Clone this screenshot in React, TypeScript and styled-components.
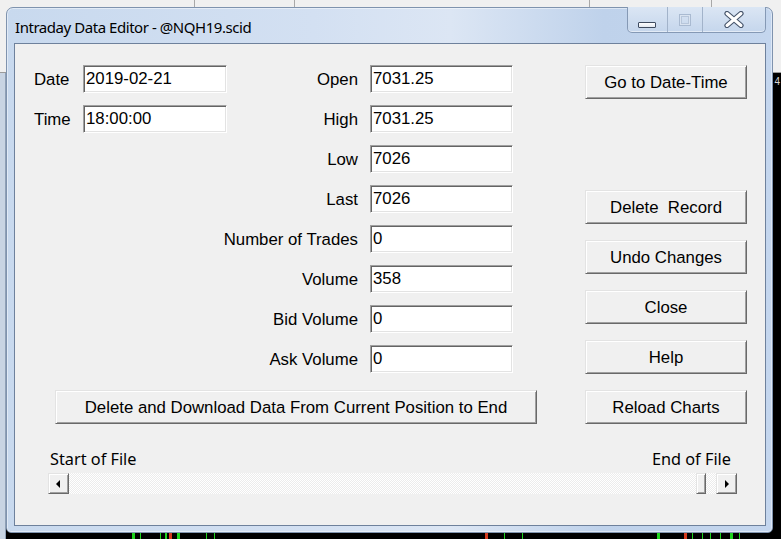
import React from 'react';
import styled, { createGlobalStyle } from 'styled-components';

const Global = createGlobalStyle`
  html, body { margin: 0; padding: 0; }
  body {
    width: 781px;
    height: 539px;
    overflow: hidden;
    font-family: "Liberation Sans", Arial, sans-serif;
  }
  * { box-sizing: border-box; }
`;

const Desktop = styled.div`
  position: relative;
  width: 781px;
  height: 539px;
  display: flex;
  flex-direction: column;
  background: #f0f0f0;
  overflow: hidden;
`;

const AppToolbar = styled.div`
  height: 73px;
  display: flex;
  background: #f0f0f0;
  border-bottom: 1px solid #9a9a9a;
`;

const ToolSegment = styled.div<{ $w: number }>`
  width: ${(p) => p.$w}px;
  height: 8px;
  border-right: 1px solid #a8a8a8;
  flex: none;
`;

const ChartRow = styled.div`
  flex: 1;
  display: flex;
`;

const LeftStrip = styled.div`
  width: 6px;
  background: #c8d4e3;
  border-right: 1px solid #8fa0b6;
`;

const Chart = styled.div`
  position: relative;
  flex: 1;
  background: #000;
`;

const ChartLabel = styled.span`
  position: absolute;
  top: 3px;
  right: 1px;
  color: #d8d8d8;
  font-size: 10px;
  line-height: 12px;
  font-family: "Liberation Sans", Arial, sans-serif;
`;

const Candles = styled.svg`
  position: absolute;
  left: 0;
  bottom: 0;
  width: 100%;
  height: 14px;
`;

const Window = styled.div`
  position: absolute;
  left: 6px;
  top: 7px;
  width: 767px;
  height: 526px;
  display: flex;
  flex-direction: column;
  border: 1px solid #7f93ae;
  border-radius: 7px 7px 5px 5px;
  background: linear-gradient(to right, #c8d9ee 0%, #d3e0f2 40%, #dce6f4 58%, #bfd2eb 78%, #c4d6ee 100%);
  box-shadow: inset 0 0 0 1px rgba(255, 255, 255, 0.45);
`;

const TitleBar = styled.div`
  height: 35px;
  flex: none;
  display: flex;
  align-items: flex-start;
  padding-left: 8px;
  padding-right: 6px;
`;

const Title = styled.div`
  padding-top: 10px;
  line-height: 18px;
  font-family: "Noto Sans", "Open Sans", sans-serif;
  font-size: 15px;
  letter-spacing: -0.45px;
  color: #000;
  white-space: nowrap;
`;

const CaptionGroup = styled.div`
  margin-left: auto;
  margin-top: -1px;
  height: 26px;
  display: flex;
  border: 1px solid #8599b5;
  border-top: none;
  border-radius: 0 0 5px 5px;
  overflow: hidden;
  background: linear-gradient(#dbe6f4, #c5d6ec);
  box-shadow: inset 0 -1px 0 rgba(255, 255, 255, 0.5);
`;

const CaptionButton = styled.div<{ $w: number; $align?: string }>`
  width: ${(p) => p.$w}px;
  display: flex;
  justify-content: center;
  align-items: ${(p) => p.$align || 'center'};
  padding-bottom: ${(p) => (p.$align === 'flex-end' ? '4px' : '0')};
  & + & {
    border-left: 1px solid #a2b3ca;
  }
`;

const MinGlyph = styled.div`
  width: 18px;
  height: 6px;
  margin-left: -1px;
  background: linear-gradient(#ffffff, #e2e8f0);
  border: 1px solid #3f4c60;
  border-radius: 1px;
`;

const MaxGlyph = styled.div`
  width: 12px;
  height: 12px;
  border: 1px solid #a9bad1;
  box-shadow: inset 0 0 0 1px #d9e3f0, inset 0 0 0 2px #b7c6da;
  margin-left: -1px;
`;

const Client = styled.div`
  flex: 1;
  margin: 0 6px 6px 7px;
  border: 1px solid #6e819c;
  background: #f0f0f0;
  padding: 21px 18px 0 19px;
  display: flex;
  flex-direction: column;
  font-family: "Liberation Sans", Arial, sans-serif;
  font-size: 16.8px;
  color: #000;
`;

const TopRow = styled.div`
  display: flex;
  align-items: flex-start;
`;

const FieldsGrid = styled.div`
  display: grid;
  grid-template-columns: 49px 144px 143px 143px;
  grid-auto-rows: 28px;
  row-gap: 12px;
`;

const Label = styled.label<{ $col: number; $row: number; $right?: boolean }>`
  grid-column: ${(p) => p.$col};
  grid-row: ${(p) => p.$row};
  align-self: center;
  justify-self: ${(p) => (p.$right ? 'end' : 'start')};
  padding-right: ${(p) => (p.$right ? '12px' : '0')};
  white-space: nowrap;
  line-height: 18px;
  margin-top: 2px;
`;

const Field = styled.div<{ $col: number; $row: number }>`
  grid-column: ${(p) => p.$col};
  grid-row: ${(p) => p.$row};
  height: 28px;
  background: #fff;
  border-top: 1px solid #a0a0a0;
  border-left: 1px solid #a0a0a0;
  border-bottom: 1px solid #ffffff;
  border-right: 1px solid #ffffff;
  box-shadow: inset 1px 1px 0 #646464, inset -1px -1px 0 #e3e3e3;
  padding: 1px 0 0 2px;
  line-height: 24px;
  white-space: nowrap;
  overflow: hidden;
`;

const ButtonColumn = styled.div`
  margin-left: auto;
  width: 162px;
  display: flex;
  flex-direction: column;
  gap: 16px;
`;

const WinButton = styled.div<{ $w?: number; $gapTop?: number }>`
  width: ${(p) => (p.$w ? `${p.$w}px` : '100%')};
  height: 34px;
  margin-top: ${(p) => p.$gapTop || 0}px;
  display: flex;
  align-items: center;
  justify-content: center;
  white-space: pre;
  background: #f0f0f0;
  border-top: 1px solid #e3e3e3;
  border-left: 1px solid #e3e3e3;
  border-bottom: 1px solid #696969;
  border-right: 1px solid #696969;
  box-shadow: inset 1px 1px 0 #ffffff, inset -1px -1px 0 #a0a0a0;
  padding-top: 1px;
`;

const BottomRow = styled.div`
  margin-top: 16px;
  display: flex;
  align-items: flex-start;
  padding-left: 21px;
`;

const ReloadButton = styled(WinButton)`
  margin-left: auto;
`;

const ScrollSection = styled.div`
  margin: 26px 10px 0 14px;
  display: flex;
  flex-direction: column;
  gap: 5px;
`;

const ScrollLabels = styled.div`
  display: flex;
  justify-content: space-between;
  padding: 0 6px 0 2px;
  font-family: "Noto Sans", "Open Sans", sans-serif;
  font-size: 16.3px;
  letter-spacing: 0px;
  line-height: 18px;
`;

const ScrollBar = styled.div`
  height: 21px;
  display: flex;
  background-color: #f7f7f7;
  background-image: repeating-conic-gradient(#ffffff 0% 25%, #ececec 0% 50%);
  background-size: 2px 2px;
`;

const ScrollButton = styled.div`
  width: 21px;
  height: 21px;
  flex: none;
  display: flex;
  align-items: center;
  justify-content: center;
  background: #f0f0f0;
  border-top: 1px solid #e3e3e3;
  border-left: 1px solid #e3e3e3;
  border-bottom: 1px solid #696969;
  border-right: 1px solid #696969;
  box-shadow: inset 1px 1px 0 #ffffff, inset -1px -1px 0 #a0a0a0;
`;

const Track = styled.div`
  flex: 1;
  display: flex;
  justify-content: flex-end;
  padding-right: 10px;
`;

const Thumb = styled.div`
  width: 10px;
  height: 21px;
  background: #f0f0f0;
  border-top: 1px solid #e3e3e3;
  border-left: 1px solid #e3e3e3;
  border-bottom: 1px solid #696969;
  border-right: 1px solid #696969;
  box-shadow: inset 1px 1px 0 #ffffff, inset -1px -1px 0 #a0a0a0;
`;

const Arrow = ({ dir }: { dir: 'left' | 'right' }) => (
  <svg width="5" height="8" viewBox="0 0 5 8">
    {dir === 'left' ? <path d="M4 0 L0 4 L4 8 Z" fill="#000" /> : <path d="M1 0 L5 4 L1 8 Z" fill="#000" />}
  </svg>
);

const CloseGlyph = () => (
  <svg width="20" height="17" viewBox="0 0 20 17">
    <path d="M3 2.5 L17 14.5 M17 2.5 L3 14.5" stroke="#46546a" strokeWidth="5.2" strokeLinecap="round" />
    <path d="M3 2.5 L17 14.5 M17 2.5 L3 14.5" stroke="#ffffff" strokeWidth="3" strokeLinecap="round" />
  </svg>
);

const candles: { x: number; c: string; w: number }[] = [
  { x: 126, c: '#1ed41e', w: 3 },
  { x: 134, c: '#1ed41e', w: 1 },
  { x: 154, c: '#1ed41e', w: 1 },
  { x: 159, c: '#1ed41e', w: 2 },
  { x: 163, c: '#d43a1e', w: 3 },
  { x: 171, c: '#1ed41e', w: 3 },
  { x: 200, c: '#1ed41e', w: 1 },
  { x: 208, c: '#1ed41e', w: 1 },
  { x: 479, c: '#d43a1e', w: 3 },
  { x: 498, c: '#1ed41e', w: 1 },
  { x: 516, c: '#1ed41e', w: 1 },
  { x: 651, c: '#1ed41e', w: 3 },
  { x: 678, c: '#d43a1e', w: 3 },
  { x: 686, c: '#1ed41e', w: 1 },
  { x: 696, c: '#1ed41e', w: 1 },
  { x: 704, c: '#1ed41e', w: 1 },
  { x: 714, c: '#1ed41e', w: 1 },
  { x: 724, c: '#1ed41e', w: 3 },
  { x: 733, c: '#1ed41e', w: 1 },
];

const leftFields = [
  { label: 'Date', value: '2019-02-21' },
  { label: 'Time', value: '18:00:00' },
];

const rightFields = [
  { label: 'Open', value: '7031.25' },
  { label: 'High', value: '7031.25' },
  { label: 'Low', value: '7026' },
  { label: 'Last', value: '7026' },
  { label: 'Number of Trades', value: '0' },
  { label: 'Volume', value: '358' },
  { label: 'Bid Volume', value: '0' },
  { label: 'Ask Volume', value: '0' },
];

export default function App() {
  return (
    <>
      <Global />
      <Desktop>
        <AppToolbar>
          <ToolSegment $w={195} />
          <ToolSegment $w={100} />
          <ToolSegment $w={295} />
          <ToolSegment $w={122} />
        </AppToolbar>
        <ChartRow>
          <LeftStrip />
          <Chart>
            <ChartLabel>4</ChartLabel>
            <Candles>
              {candles.map((k, i) => (
                <rect key={i} x={k.x} y={2} width={k.w} height={12} fill={k.c} />
              ))}
            </Candles>
          </Chart>
        </ChartRow>

        <Window>
          <TitleBar>
            <Title>Intraday Data Editor - @NQH19.scid</Title>
            <CaptionGroup>
              <CaptionButton $w={39} $align="flex-end">
                <MinGlyph />
              </CaptionButton>
              <CaptionButton $w={35}>
                <MaxGlyph />
              </CaptionButton>
              <CaptionButton $w={63}>
                <CloseGlyph />
              </CaptionButton>
            </CaptionGroup>
          </TitleBar>

          <Client>
            <TopRow>
              <FieldsGrid>
                {leftFields.map((f, i) => (
                  <React.Fragment key={f.label}>
                    <Label $col={1} $row={i + 1}>{f.label}</Label>
                    <Field $col={2} $row={i + 1}>{f.value}</Field>
                  </React.Fragment>
                ))}
                {rightFields.map((f, i) => (
                  <React.Fragment key={f.label}>
                    <Label $col={3} $row={i + 1} $right>{f.label}</Label>
                    <Field $col={4} $row={i + 1}>{f.value}</Field>
                  </React.Fragment>
                ))}
              </FieldsGrid>
              <ButtonColumn>
                <WinButton>Go to Date-Time</WinButton>
                <WinButton $gapTop={75}>Delete  Record</WinButton>
                <WinButton>Undo Changes</WinButton>
                <WinButton>Close</WinButton>
                <WinButton>Help</WinButton>
              </ButtonColumn>
            </TopRow>

            <BottomRow>
              <WinButton $w={482}>Delete and Download Data From Current Position to End</WinButton>
              <ReloadButton $w={162}>Reload Charts</ReloadButton>
            </BottomRow>

            <ScrollSection>
              <ScrollLabels>
                <span>Start of File</span>
                <span>End of File</span>
              </ScrollLabels>
              <ScrollBar>
                <ScrollButton>
                  <Arrow dir="left" />
                </ScrollButton>
                <Track>
                  <Thumb />
                </Track>
                <ScrollButton>
                  <Arrow dir="right" />
                </ScrollButton>
              </ScrollBar>
            </ScrollSection>
          </Client>
        </Window>
      </Desktop>
    </>
  );
}
